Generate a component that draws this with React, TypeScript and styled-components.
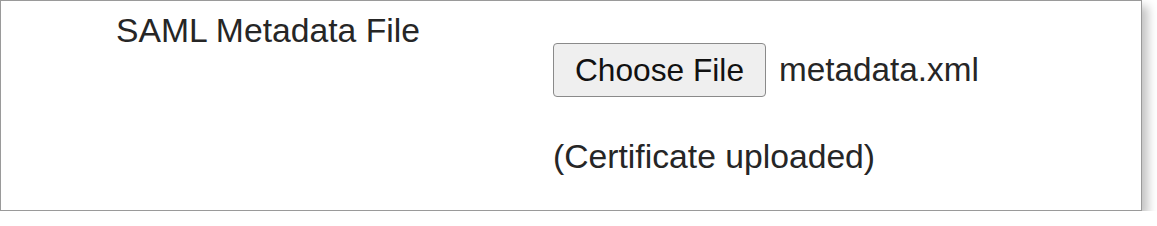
import React from 'react';
import styled, {createGlobalStyle} from "styled-components";

const Global = createGlobalStyle`
    body {
        margin: 0;
        background: #fff;
        font-family: "Liberation Sans", Arial, sans-serif;
        color: #262626;
    }
`

const Panel = styled.div`
    box-sizing: border-box;
    width: 1142px;
    height: 211px;
    border: 1.5px solid #9a9a9a;
    background: #fff;
    box-shadow: 6px 6px 9px rgba(0, 0, 0, 0.24);
    display: grid;
    grid-template-columns: 552px 1fr;
`

const Label = styled.div`
    padding: 10px 0 0 115px;
    font-size: 33.7px;
`

const Values = styled.div`
    display: flex;
    flex-direction: column;
    padding-top: 42px;
    gap: 40px;
`

const FileRow = styled.div`
    display: flex;
    align-items: center;
    gap: 13px;
    font-size: 33.3px;
`

const ChooseButton = styled.button`
    box-sizing: border-box;
    height: 54px;
    width: 213px;
    padding: 0;
    font-family: "Liberation Sans", Arial, sans-serif;
    font-size: 31.7px;
    color: #111;
    background: #efefef;
    border: 1.5px solid #8a8a8a;
    border-radius: 4px;
`

const Note = styled.div`
    font-size: 33.7px;
`

const App = () => {
    return (
        <>
            <Global/>
            <Panel>
                <Label>SAML Metadata File</Label>
                <Values>
                    <FileRow>
                        <ChooseButton>Choose File</ChooseButton>
                        <span>metadata.xml</span>
                    </FileRow>
                    <Note>(Certificate uploaded)</Note>
                </Values>
            </Panel>
        </>
    );
};

export default App;
